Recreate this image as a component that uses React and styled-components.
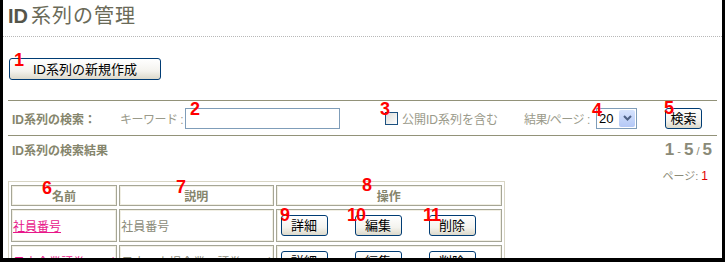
import React from 'react';
import styled, { createGlobalStyle } from 'styled-components';

const Global = createGlobalStyle`
  html, body { margin: 0; padding: 0; background: #fff; }
  body { font-family: "Liberation Sans", "Noto Sans CJK JP", sans-serif; }
`;

const Frame = styled.div`
  position: relative;
  width: 725px;
  height: 262px;
  box-sizing: border-box;
  border-left: 3px solid #000;
  border-right: 3px solid #000;
  border-bottom: 4px solid #000;
  overflow: hidden;
  background: #fff;
`;

const Title = styled.h1`
  margin: 0;
  height: 36px;
  box-sizing: content-box;
  padding-left: 5px;
  border-bottom: 1px dotted #b8b8b8;
  font-size: 20px;
  line-height: 32px;
  font-weight: normal;
  letter-spacing: 1px;
  color: #6a6a58;
  b { font-weight: bold; color: #55554a; letter-spacing: 0; margin-right: 3px; }
`;

const ButtonBar = styled.div`
  padding: 21px 6px 20px;
`;

const XpButton = styled.button`
  box-sizing: border-box;
  height: ${p => p.$h || 22}px;
  width: ${p => p.$w}px;
  padding: 0;
  border: 1px solid #003c74;
  border-radius: 3px;
  background: linear-gradient(#ffffff, #f4f3ee 60%, #dcd9cb);
  font-family: "Liberation Sans", "Noto Sans CJK JP", sans-serif;
  font-size: 13px;
  color: #000;
  line-height: 1;
  flex: none;
`;

const Section = styled.div`
  margin: 0 5px;
`;

const SearchRow = styled.div`
  display: flex;
  align-items: center;
  height: 34px;
  border-top: 1px solid #929279;
  border-bottom: 1px solid #929279;
  padding-left: 4px;
  font-size: 12px;
`;

const SearchLabel = styled.span`
  font-weight: bold;
  color: #85856c;
  width: 108px;
  flex: none;
  white-space: nowrap;
`;

const Muted = styled.span`
  color: #9a9a8a;
  width: ${p => p.$w}px;
  flex: none;
  white-space: nowrap;
  letter-spacing: ${p => p.$ls || 0}px;
`;

const TextInput = styled.div`
  box-sizing: border-box;
  width: 155px;
  height: 21px;
  border: 1px solid #7f9db9;
  background: #fff;
  margin-right: 45px;
  flex: none;
`;

const Check = styled.span`
  box-sizing: border-box;
  width: 13px;
  height: 13px;
  border: 1px solid #1c5180;
  background: linear-gradient(135deg, #dcdcd7, #fff);
  margin-right: 4px;
  flex: none;
`;

const Select = styled.div`
  box-sizing: border-box;
  display: flex;
  align-items: stretch;
  width: 41px;
  height: 21px;
  border: 1px solid #7f9db9;
  margin-right: 28px;
  font-size: 13px;
  color: #000;
  flex: none;
  span { flex: 1; line-height: 19px; padding-left: 2px; }
  i {
    width: 16px;
    margin: 1px;
    border-radius: 2px;
    background: linear-gradient(#d6e3fd, #b4c8f6);
    display: flex;
    align-items: center;
    justify-content: center;
  }
`;

const ResultHead = styled.div`
  display: flex;
  justify-content: space-between;
  height: 45px;
  padding: 0 5px 0 4px;
`;

const ResultLabel = styled.div`
  font-size: 12px;
  font-weight: bold;
  color: #85856c;
  padding-top: 5px;
`;

const Pager = styled.div`
  display: flex;
  flex-direction: column;
  align-items: flex-end;
  color: #8a8a78;
`;

const Count = styled.div`
  font-size: 17px;
  font-weight: bold;
  line-height: 20px;
  margin-top: 4px;
  small { font-size: 11px; font-weight: normal; margin: 0 3px; }
`;

const PageNo = styled.div`
  font-size: 11px;
  margin-top: 6px;
  margin-right: 4px;
  em { font-style: normal; color: #e00000; font-size: 12px; }
`;

const Table = styled.table`
  border-collapse: separate;
  border-spacing: 2px 3px;
  border: 1px solid #d8d5c4;
  table-layout: fixed;
  width: 497px;
  font-size: 12px;
`;

const Col = styled.col`
  width: ${p => p.$w}px;
`;

const Th = styled.th`
  height: 19px;
  border: 1px solid #a6a696;
  box-shadow: inset 0 0 0 1px #f1efe4;
  color: #85856c;
  font-weight: bold;
  padding: 0;
`;

const Td = styled.td`
  height: 31px;
  border: 1px solid #a6a696;
  box-shadow: inset 0 0 0 1px #f1efe4;
  color: #8a8a78;
  padding: 0 1px;
  white-space: nowrap;
  overflow: hidden;
`;

const NameLink = styled.a`
  color: #e8168a;
  text-decoration: underline;
`;

const Actions = styled.div`
  display: flex;
  gap: 27px;
  padding-left: 3px;
`;

const Badge = styled.span`
  position: absolute;
  left: ${p => p.$x - 3}px;
  top: ${p => p.$y - 2}px;
  font-family: "Liberation Sans", sans-serif;
  font-weight: bold;
  font-size: 18px;
  line-height: 18px;
  color: #ff0000;
  letter-spacing: -1px;
`;

const rows = [
  { name: '社員番号', desc: '社員番号' },
  { name: '日本企業証券コード', desc: '日本の上場企業の証券コード' },
];

const badges = [
  ['1', 14, 53], ['2', 190, 102], ['3', 380, 102], ['4', 592, 103], ['5', 664, 101],
  ['6', 42, 181], ['7', 176, 180], ['8', 362, 178], ['9', 280, 208], ['10', 347, 208], ['11', 423, 208],
];

export default function App() {
  return (
    <>
      <Global />
      <Frame>
        <Title><b>ID</b>系列の管理</Title>
        <ButtonBar>
          <XpButton $w={152}>ID系列の新規作成</XpButton>
        </ButtonBar>
        <Section>
          <SearchRow>
            <SearchLabel>ID系列の検索：</SearchLabel>
            <Muted $w={65} $ls={-0.5}>キーワード :</Muted>
            <TextInput />
            <Check />
            <Muted $w={122}>公開ID系列を含む</Muted>
            <Muted $w={72} $ls={-0.5}>結果/ページ :</Muted>
            <Select>
              <span>20</span>
              <i>
                <svg width="9" height="6" viewBox="0 0 9 6">
                  <path d="M1 1 L4.5 4.5 L8 1" stroke="#4d6185" strokeWidth="2" fill="none" />
                </svg>
              </i>
            </Select>
            <XpButton $w={37} $h={21}>検索</XpButton>
          </SearchRow>
          <ResultHead>
            <ResultLabel>ID系列の検索結果</ResultLabel>
            <Pager>
              <Count>1<small>-</small>5<small>/</small>5</Count>
              <PageNo>ページ: <em>1</em></PageNo>
            </Pager>
          </ResultHead>
          <Table>
            <colgroup>
              <Col $w={106} />
              <Col $w={154} />
              <Col $w={226} />
            </colgroup>
            <thead>
              <tr>
                <Th>名前</Th>
                <Th>説明</Th>
                <Th>操作</Th>
              </tr>
            </thead>
            <tbody>
              {rows.map(r => (
                <tr key={r.name}>
                  <Td><NameLink href="#">{r.name}</NameLink></Td>
                  <Td>{r.desc}</Td>
                  <Td>
                    <Actions>
                      <XpButton $w={47} $h={21}>詳細</XpButton>
                      <XpButton $w={47} $h={21}>編集</XpButton>
                      <XpButton $w={47} $h={21}>削除</XpButton>
                    </Actions>
                  </Td>
                </tr>
              ))}
            </tbody>
          </Table>
        </Section>
        {badges.map(([t, x, y]) => (
          <Badge key={t} $x={x} $y={y}>{t}</Badge>
        ))}
      </Frame>
    </>
  );
}
